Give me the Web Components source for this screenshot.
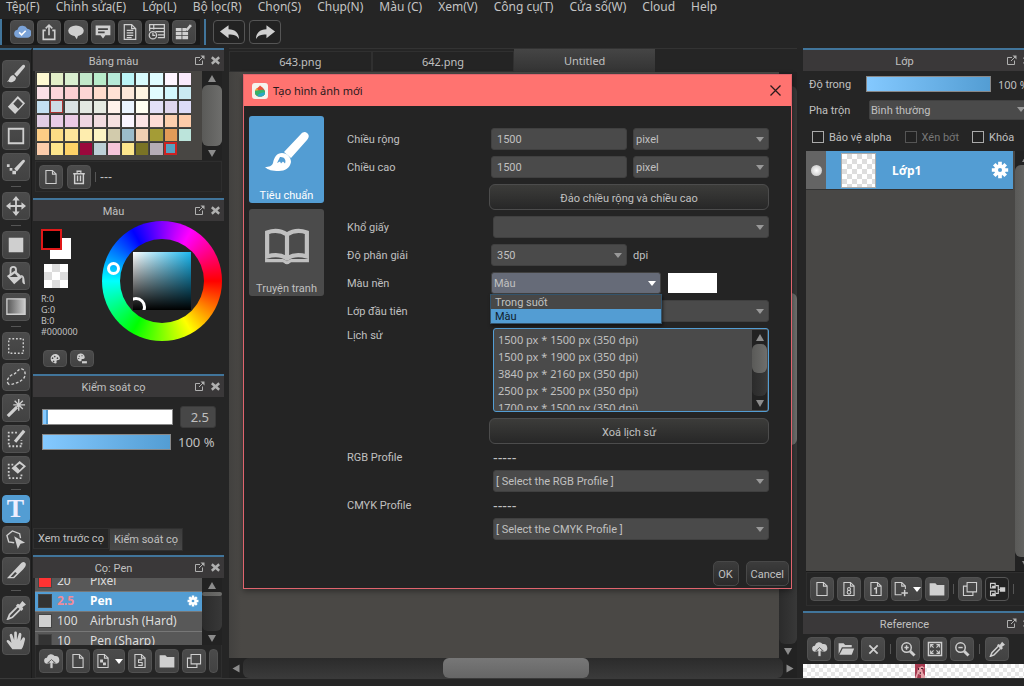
<!DOCTYPE html>
<html lang="vi">
<head>
<meta charset="utf-8">
<title>Untitled</title>
<style>
html, body { margin: 0; height: 100%; background: #252525; overflow: hidden; }
body { font-family: Roboto, "Noto Sans", sans-serif; font-size: 11px; color: #c0c0c0; }
</style>
</head>
<body>
<paint-app></paint-app>
<script>
const BASE = `*{box-sizing:border-box}button,input,select{font:inherit;color:inherit}h1,h2,p,ul{margin:0;padding:0;font:inherit}ul{list-style:none}`;

// Registers an element whose shadow root is cloned from a template.
function define(name, css, html) {
  const tpl = document.createElement('template');
  customElements.define(name, class extends HTMLElement {
    connectedCallback() {
      if (this.shadowRoot) return;
      const root = this.attachShadow({ mode: 'open' });
      tpl.innerHTML = `<style>${BASE}${css}</style>` + (typeof html === 'function' ? html(this) : html);
      root.append(tpl.content.cloneNode(true));
    }
  });
}

const S = 'fill="none" stroke="currentColor" stroke-width="1.5"';
const S2 = 'fill="none" stroke="currentColor" stroke-width="2"';
const PAGE = `<path ${S} d="M4 2h9l5 5v13H4z"/><path ${S} d="M13 2v5h5"/>`;
const CLOUD = 'M6 14a4 4 0 0 1-1-8 5.500 5.500 0 0 1 10-2 4.500 4.500 0 0 1 2 10z';
const ICONS = {
  blank: '',
  cloud: `<path fill="#7ba3d8" d="M6 18a5 5 0 0 1-.5-9.900A6.500 6.500 0 0 1 17.500 7 5.500 5.500 0 0 1 17 18z"/><path fill="none" stroke="#fff" stroke-width="2" d="m7.500 11.500 3 3 5-5"/>`,
  share: `<path ${S2} d="M7 9H4v11h14V9h-3M11 15V3M7 6.500 11 2.500l4 4"/>`,
  bubble: `<ellipse cx="11" cy="9.500" rx="9.500" ry="6.500" fill="currentColor"/><path fill="currentColor" d="M8 14h6l-2 6z"/>`,
  message: `<path fill="currentColor" d="M2 3h18v12h-6l-3 4-3-4H2z"/><path stroke="#444" stroke-width="2" d="M5 7.500h12M5 11.500h8"/>`,
  doc: `${PAGE}<path ${S} d="M7 9h8M7 12h8M7 15h8M7 18h6"/>`,
  history: `<path ${S} d="M2 10V2h18v16h-8M2 6.500h18M7 2v6M9 10.500h11M12 14.500h8"/><circle cx="6" cy="15" r="4.500" ${S}/><path ${S} d="M6 12v3h3"/>`,
  tiles: `<path fill="currentColor" d="M1 6h7v4H1zM9 6h5v4H9zM1 11h7v4H1zM9 11h7v4H9zM1 16h7v4H1zM9 16h7v4H9z"/><path stroke="currentColor" stroke-width="3" d="m14 9 5-6"/><path fill="currentColor" d="M17 2h3v3z"/>`,
  undo: `<path fill="currentColor" d="M1 10 10 3.500v4c7 0 11 4 11 10.500-2-4-5-5-11-5v4z"/>`,
  redo: `<path fill="currentColor" d="M21 10 12 3.500v4C5 7.500 1 11.500 1 18c2-4 5-5 11-5v4z"/>`,
  page: PAGE,
  page8: `${PAGE}<circle cx="11" cy="11" r="2" ${S}/><circle cx="11" cy="15.500" r="2.500" ${S}/>`,
  page1: `${PAGE}<path ${S2} d="m8.500 11 3-1.500V17.500"/>`,
  pageplus: `<path ${S} d="M12 19H3V2h9l5 5v4M12 2v5h5"/><path ${S2} d="M16 12v9M11.500 16.500h9"/>`,
  pages: `${PAGE}<path ${S} d="M14 9.500H9v3.500h5v4H8.500"/>`,
  pagechk: `${PAGE}<path fill="currentColor" d="M7 9h4v4H7zM11 13h4v4h-4z"/>`,
  trash: `<path ${S2} d="M3 6.500h16M8.500 5V3h5v2M5 7v13h12V7M9 9v8M13 9v8"/>`,
  folder: `<path fill="currentColor" d="M2 4h7l2 2h9v13H2z"/>`,
  folderopen: `<path fill="currentColor" d="M2 17V4h6l2 2h8v3H6z"/><path fill="currentColor" d="M7 10.500h14L18 18H3z"/>`,
  copy: `<path ${S} d="M7 2h13v13H7z"/><path ${S} d="M7 7H2v13h13v-5"/>`,
  upload: `<path fill="currentColor" d="${CLOUD}"/><path fill="currentColor" stroke="#444" d="M11 8.500 16 13h-3v7H9v-7H6z"/>`,
  tree: `<path ${S} d="M2 3h6v6H2zM2 13h6v6H2zM9 6h3v10H9M12 11h2"/><path fill="currentColor" d="M14 8h7v6h-7zM4 6h4v3H4zM4 16h4v3H4z"/>`,
  cross: `<path stroke="currentColor" stroke-width="3" d="m4 4 14 14M18 4 4 18"/>`,
  zoomin: `<circle cx="9" cy="9" r="6.500" ${S2}/><path stroke="currentColor" stroke-width="4" d="m14 14 6 6"/><path ${S2} d="M9 6v6M6 9h6"/>`,
  zoomout: `<circle cx="9" cy="9" r="6.500" ${S2}/><path stroke="currentColor" stroke-width="4" d="m14 14 6 6"/><path ${S2} d="M6 9h6"/>`,
  fit: `<path ${S2} d="M2 2h18v18H2z"/><path ${S} d="M5 9V5h4M13 5h4v4M17 13v4h-4M9 17H5v-4M5 5l4 4M17 5l-4 4M5 17l4-4M17 17l-4-4"/>`,
  palette: `<path fill="currentColor" fill-rule="evenodd" d="M11 2a9 8.500 0 1 0 2 17c2-1 0-3 1-5s6 0 6-4-4-8-9-8zM7 8a1.500 1.500 0 1 1-1 3 1.500 1.500 0 0 1 1-3m4-3a1.500 1.500 0 1 1-1 3 1.500 1.500 0 0 1 1-3m5 3a1.500 1.500 0 1 1-1 3 1.500 1.500 0 0 1 1-3m-8 6a1.500 1.500 0 1 1-1 2 1.500 1.500 0 0 1 1-2"/>`,
  palette2: `<path fill="currentColor" fill-rule="evenodd" d="M8 1a7 7 0 1 0 2 14v-3c1-2 6 1 6-4a7 7 0 0 0-8-7zM5 5h2v2H5zm5-1h2v2h-2zM4 9h2v2H4z"/><path fill="currentColor" d="M11 15h9v4h-9z"/>`,
  popout: `<path ${S2} d="M12 5H3v14h14v-8M10 12l9-9"/><path fill="currentColor" d="M13 1h8v8z"/>`,
  close: `<path stroke="currentColor" stroke-width="6" d="m2 3 18 16M20 3 2 19"/>`,
  brush: `<path fill="currentColor" d="M20.500 1.500c1 1 .5 2-.5 3L12 14l-3-3 8.500-9c1-1 2-1.500 3-.5zM8 12l3 3c0 3-3 5-6 5-2 0-3-.5-4-1 3-.5 2-6 7-7z"/>`,
  eraser: `<path fill="currentColor" fill-rule="evenodd" d="M13 1l8 8-11 12-8-8zM13 4l-5 5.500 5.500 5.500 5-5.500z"/>`,
  rect: `<path ${S2} d="M3 3h16v16H3z"/>`,
  dotpen: `<path fill="currentColor" d="M1 8h3v3H1zM4 12h3v3H4zM7 15h4v4H7zM20.500 3.500c1 1 0 2-1 3L12 16l-3-3 8.500-9c1-1 2-1.500 3-.5z"/>`,
  move: `<path ${S2} d="M11 3v16M3 11h16"/><path fill="currentColor" d="m11 0 4 5H7zM11 22l4-5H7zM0 11l5-4v8zM22 11l-5-4v8z"/>`,
  square: `<path fill="currentColor" d="M3 3h16v16H3z"/>`,
  bucket: `<path ${S2} d="M5 10V4a3 3 0 0 1 6 0v5"/><path fill="currentColor" fill-rule="evenodd" d="m10 5 8 7-9 8-8-9zm0 3-6 4h9z"/><path fill="currentColor" d="M16 10c5 0 4 5 5 10-4 0-3-4-3-7z"/>`,
  gradient: `<defs><linearGradient id="g"><stop stop-color="#555"/><stop offset="1" stop-color="#ccc"/></linearGradient></defs><path fill="url(#g)" stroke="currentColor" stroke-width="1.500" d="M1 2h20v17H1z"/>`,
  marquee: `<path fill="none" stroke="currentColor" stroke-width="1.500" stroke-dasharray="2 2" d="M3 3h16v16H3z"/>`,
  lasso: `<path fill="none" stroke="currentColor" stroke-width="1.500" stroke-dasharray="3 2" d="M3 19C-1 15 4 9 8 8s5-6 9-6c5 1 5 8 2 11s-6 4-9 5-6 2-7 1z"/>`,
  wand: `<path stroke="currentColor" stroke-width="3.500" d="M2 20 12 10"/><path ${S} d="M14 1v13M8 7.500h13M9.500 3l9 9M18.500 3l-9 9"/>`,
  selpen: `<path ${S2} stroke-dasharray="2 2" d="M12 4H3v15h14v-7"/><path stroke="currentColor" stroke-width="3.500" d="M10 14 20 2"/>`,
  seleraser: `<path ${S2} stroke-dasharray="2 2" d="M8 5H3v15h14v-6"/><path fill="currentColor" fill-rule="evenodd" d="m15 1 7 6-9 8-7-6zm0 3-4 3 4 4 4-4z"/>`,
  polyarrow: `<path ${S} d="m9 14-6-1-2-7 6-5 8 3 1 5"/><path fill="currentColor" d="m9 7 12 7-5 1-3 6z"/>`,
  knife: `<path fill="currentColor" fill-rule="evenodd" d="M21 2c2 2 0 5-2 7L9 19H1L15 4c2-2 4-4 6-2zM10 12 5 17.500h3l4-4z"/>`,
  dropper: `<path ${S2} d="m13 7-9 9-2 5 5-2 9-9"/><path fill="currentColor" d="m11 6 2-2 2 1 3-4 4 4-4 3 1 2-2 2z"/>`,
  hand: `<path fill="currentColor" d="M7 20 1 12c-1-2 1-3 3-1l2 2L4 5c0-2 2-3 3-1l2 6V2c0-2 3-2 3 0v8l2-7c1-2 3-1 3 1l-1 7 2-3c1-2 3-1 3 1-1 4-2 9-4 11z"/>`,
  bigbrush: `<path fill="currentColor" d="M21 1.500c1.300 1 1 2.200 0 3.500L13 14 9.500 11 18 2c1-1 2-1.300 3-.5z"/><path fill="currentColor" fill-rule="evenodd" d="M8.500 11.500c2.500 0 4.500 2 4.500 4.500-.5 3-3 4.500-6 4.500-3.500 0-5.500-.5-7-2 2 0 3.500-.5 4-2 .5-3 2-5 4.500-5zm-1 2-1.500 3 1.500-.7.5 1 1-1 1 1c.8-2-.5-3.500-2.500-3.300z"/>`,
  book: `<path ${S2} d="M11 5.500C8 3.500 4.500 3.500 1.500 4.500V16c3-.8 7-.8 9.500 1 2.500-1.800 6.500-1.800 9.500-1V4.500c-3-1-6.500-1-9.500 1zM11 5.500V17"/><path ${S} d="M.5 18h8.500c1 0 1 1 2 1s1-1 2-1h8.500"/>`,
  gear: `<g stroke="currentColor" stroke-width="4.500"><path d="M11 1v20M1 11h20M4 4l14 14M18 4 4 18"/></g><circle cx="11" cy="11" r="7" fill="currentColor"/><circle cx="11" cy="11" r="2.500" fill="#539dd3"/>`,
  thin: `<path stroke="currentColor" stroke-width="2.500" d="m1 1 20 20M21 1 1 21"/>`,
  drop: `<rect width="22" height="22" rx="4" fill="#f4f4ee"/><clipPath id="c"><path d="M11 3c1 2 7 4 7 10a7 6 0 0 1-14 0c0-6 5-6 7-10z"/></clipPath><g clip-path="url(#c)"><path fill="#e8513c" d="M0 0h22v22H0z"/><path fill="#f0a83a" d="M3 6l4 1 2 4H3z"/><path fill="#35b36a" d="M3 11c5-1 9-1 12-2l5 2v11H3z"/><path fill="#2aa7c7" d="M7 20c0-5 5-7 12-7v9H7z"/></g>`,
};

define('ui-icon', `:host{display:inline-flex;flex:none}svg{display:block;width:var(--s);height:var(--s)}`,
  el => `<svg viewBox="0 0 22 22" style="--s:${el.getAttribute('size') || 18}px" aria-hidden="true">${ICONS[el.getAttribute('name')]}</svg>`);

define('icon-button', `
:host{display:block;flex:none}
button{display:flex;align-items:center;justify-content:center;gap:4px;width:var(--w,24px);height:var(--h,24px);padding:0;border:1px solid #525252;border-radius:4px;background:linear-gradient(#4b4b4b,#424242);color:#cfcfcf}
:host([dark]) button{background:#222;border-color:#555}
:host([on]) button{background:#539dd3;border-color:#539dd3;color:#eef}
.t{font:bold 26px/26px "Liberation Serif",serif}
i{border:4px solid transparent;border-top:5px solid #fff;border-bottom:0}`,
  el => `<button type="button" aria-label="${el.getAttribute('icon') || 'text'}">${el.hasAttribute('letter') ? '<span class="t">T</span>' : `<ui-icon name="${el.getAttribute('icon')}" size="${el.getAttribute('size') || 16}"></ui-icon>`}${el.hasAttribute('menu') ? '<i></i>' : ''}</button>`);

define('scroll-bar', `
:host{display:flex;flex-direction:column;flex:none;width:18px;background:#222}
:host([horizontal]){flex-direction:row;width:auto;height:20px}
b{flex:none;width:100%;height:14px;display:grid;place-items:center}
:host([horizontal]) b{width:14px;height:100%}
b::before{content:"";border:4px solid transparent;border-bottom:7px solid #8c8c8c;border-top:0}
b.e::before{transform:rotate(180deg)}
:host([horizontal]) b::before{transform:rotate(-90deg)}
:host([horizontal]) b.e::before{transform:rotate(90deg)}
.track{flex:1;min-height:0;display:flex;flex-direction:column;border-radius:6px;background:linear-gradient(90deg,#2b2b2b,#383838)}
:host([horizontal]) .track{flex-direction:row;background:linear-gradient(#2b2b2b,#3a3a3a)}
.before{flex:var(--before,0)}.after{flex:var(--after,1)}
.thumb{flex:var(--thumb,1);border-radius:6px;background:linear-gradient(90deg,#5a5a58,#6e6e6c)}
:host([horizontal]) .thumb{background:linear-gradient(#777,#666)}`,
  `<b></b><div class="track"><div class="before"></div><div class="thumb"></div><div class="after"></div></div><b class="e"></b>`);

define('dock-panel', `
:host{display:flex;flex-direction:column;border-top:2px solid #41759b;background:#252525}
header{display:flex;align-items:center;height:21px;flex:none;padding-right:4px;background:#3a3839}
h2{flex:1;text-align:center;font-size:11px;line-height:17px;padding-top:2px}
header button{display:flex;padding:0;border:0;background:none;color:#b0b0b0;margin-left:6px}
header button:first-of-type{margin-left:0}`,
  el => `<header><h2>${el.getAttribute('heading')}</h2><button aria-label="Tách bảng"><ui-icon name="popout" size="11"></ui-icon></button><button aria-label="Đóng"><ui-icon name="close" size="9"></ui-icon></button></header><slot></slot>`);

define('menu-bar', `
:host{display:block;height:17px;font:12px/13px "Noto Sans",sans-serif;white-space:nowrap}
nav{display:flex;gap:16px;padding-left:6px}
a{color:#c4c4c4;text-decoration:none}`,
  `<nav>${['Tệp(F)','Chỉnh sửa(E)','Lớp(L)','Bộ lọc(R)','Chọn(S)','Chụp(N)','Màu (C)','Xem(V)','Công cụ(T)','Cửa sổ(W)','Cloud','Help'].map(t => `<a href="#">${t}</a>`).join('')}</nav>`);

define('main-tools', `
:host{display:flex;height:31px;padding:2px 0 3px;background:#252525}
div{display:flex;align-items:center;gap:3px;background:#191919;border-left:2px solid #41759b;padding:0 4px 0 8px}
div.e{background:none;gap:4px;padding-left:7px;margin-left:4px}
.e icon-button{--w:32px}`,
  `<div>${['cloud','share','bubble','message','doc','history','tiles'].map(i => `<icon-button icon="${i}" size="18"></icon-button>`).join('')}</div><div class="e"><icon-button dark icon="undo" size="21"></icon-button><icon-button dark icon="redo" size="21"></icon-button></div>`);

define('tool-rail', `
:host{display:flex;flex-direction:column;align-items:center;gap:3px;flex:none;width:32px;padding-top:10px;border-top:2px solid #36607e;border-right:1px solid #1b1b1b}
icon-button{--w:28px;--h:28px}
hr{flex:none;width:10px;height:5px;margin:0;border:0;background:linear-gradient(#555,#555) center/100% 1px no-repeat}`,
  'brush eraser rect dotpen - move - square bucket gradient - marquee lasso wand selpen seleraser - T polyarrow knife - dropper hand'.split(' ').map(i => i === '-' ? '<hr>' : i === 'T' ? '<icon-button on letter></icon-button>' : `<icon-button icon="${i}" size="20"></icon-button>`).join(''));

const PALETTE = `fffad2 e3efc8 daefd0 c2e8ca b9eccb b6ead8 bcf5f7 d8fbfd dffcff fff6ff f9eafb
fbe0e6 fcd6da fcd0d2 fcd5d4 ffdccd ffe1d4 fce9da fff5e2 e2fdff d4f8fd caeaf2
c3e0f1 cddbe6 dae1e4 e3e8e2 e6ebe2 fff2ea ebf5ff fffff2 e3e0f7 dfd6ed dcdbf7
e1cde4 e9cce6 ebcae6 eed6e2 f2dce0 f5e1e0 faf5ff fbe5e6 fddcd6 fccfae fdcba9
fdcd85 fddd85 fee59b feedae fdf4c4 d2cbac 9cbccb f1d0b3 a49c36 e29b58 bce4db
fcccaa fee58b fdd267 9b083c bdd0d6 f5c4d8 fde68c 7a7325 b5acb5 57a0c0`.split(/\s+/);

define('palette-panel', `
:host{display:block;height:121px;padding:0 2px 0 2px}
.top{display:flex;height:89px;background:#484643}
.grid{flex:1;display:grid;grid-template-columns:repeat(11,1fr);grid-auto-rows:13px;gap:1px;align-content:start;padding:1px 11px 0 1px;margin:0}
.grid i{border:solid #3a3a38;border-width:1px 0 0 1px}
.grid i.a{border:1px solid #a33}.grid i.b{border:2px solid #c22}
.bar{display:flex;align-items:center;gap:4px;height:31px;margin-top:1px;padding-left:3px;border:1px solid #2e2e2e;font:12px "Liberation Sans",sans-serif}
s{width:1px;height:10px;background:#555}
scroll-bar{width:20px;--thumb:9;--after:0}`,
  `<div class="top"><div class="grid">${PALETTE.map((c, i) => `<i class="${i === 23 ? 'a' : i === 64 ? 'b' : ''}" style="background:#${c}"></i>`).join('')}</div><scroll-bar></scroll-bar></div><div class="bar"><icon-button icon="page"></icon-button><icon-button icon="trash"></icon-button><s></s><span>---</span></div>`);

define('color-panel', `
:host{display:flex;flex:none;height:147px;padding:0 2px 0 8px;justify-content:space-between}
.left{padding-top:8px}
.pair{position:relative;height:30px;width:30px}
.pair i{position:absolute;width:21px;height:21px}
.pair .bg{right:0;bottom:0;background:#fff}.pair .fg{left:0;top:0;background:#000;border:2px solid #e01818}
.clear{width:24px;height:24px;margin:5px 0 5px 3px;background:repeating-conic-gradient(#ddd 0 25%,#fff 0 50%) 0 0/16px 16px}
p{font:9px/11px "Noto Sans",sans-serif;height:57px}
.btns{display:flex;gap:3px;padding-left:2px}
.btns icon-button{--h:17px}
.wheel{position:relative;width:120px;height:120px;border-radius:50%;background:conic-gradient(from 90deg,red,yellow,lime,cyan,blue,magenta,red);display:grid;place-items:center}
.hole{width:84px;height:84px;border-radius:50%;background:#252525;display:grid;place-items:center}
.sv{position:relative;overflow:hidden;width:58px;height:58px;background:linear-gradient(transparent,#000),linear-gradient(90deg,#fff,#1bb8f0)}
.sv::after{content:"";position:absolute;left:-7px;bottom:-7px;width:14px;height:14px;border:3px solid #fff;border-radius:50%}
.dot{position:absolute;left:5px;top:41px;width:13px;height:13px;border:3px solid #fff;border-radius:50%}`,
  `<div class="left"><div class="pair"><i class="bg"></i><i class="fg"></i></div><div class="clear"></div><p>R:0<br>G:0<br>B:0<br>#000000</p><div class="btns"><icon-button icon="palette" size="12"></icon-button><icon-button icon="palette2" size="12"></icon-button></div></div><div class="wheel"><div class="hole"><div class="sv"></div></div><span class="dot"></span></div>`);

const RANGE = `input[type=range]{appearance:none;display:block;margin:0;height:16px;min-width:0;border:1px solid #888;background:linear-gradient(90deg,#84c9ff,#539dd3)}input[type=range]::-webkit-slider-thumb{appearance:none;width:1px;height:14px}`;

define('control-panel', `
:host{display:flex;flex:1;flex-direction:column;min-height:0;padding-top:7px}
${RANGE}
.r{display:flex;align-items:center;gap:7px;height:25px;padding:0 8px 0 9px;font:13px "Noto Sans",sans-serif}
.r:first-child{margin-top:6px}
.r input[type=range]{flex:1}
input.size{background:linear-gradient(90deg,#84c9ff 3px,#539dd3 3px 5px,#fff 5px)}
input.num{width:36px;height:22px;padding:0 6px 0 0;text-align:right;border:1px solid #3a3a3a;border-radius:3px;background:#474747}
output{width:38px;white-space:nowrap}
.tabs{display:flex;margin-top:auto;height:23px;font-size:11px}
.tabs button{padding:0 4px;border:1px solid #303030;background:#252525;margin-bottom:2px}
.tabs button+button{margin:0;background:linear-gradient(#3c3c3c,#484848)}`,
  `<div class="r"><input class="size" type="range" value="1" aria-label="Kích thước"><input class="num" value="2.5" aria-label="Kích thước"></div><div class="r"><input type="range" value="100" aria-label="Độ trong"><output>100 %</output></div><div class="tabs"><button>Xem trước cọ</button><button>Kiểm soát cọ</button></div>`);

define('brush-panel', `
:host{display:block;padding:0 2px 0}
.top{display:flex;height:67px}
ul{flex:1;display:flex;flex-direction:column;justify-content:center;overflow:hidden;background:#333;font:12px/18px "Noto Sans",sans-serif;color:#ddd}
li{flex:none;display:grid;grid-template-columns:14px 28px 1fr auto;gap:5px;align-items:center;height:20px;padding:0 3px;background:#585858;border-bottom:1px solid #777}
li i{width:14px;height:14px;background:var(--c);border:1px solid #444}
li.on{background:#539dd3;color:#fff;font-weight:bold}.on span:first-of-type{color:#f28b96}
.bar{display:flex;gap:3px;padding:4px 0 0 3px;height:33px;overflow:hidden;border:1px solid #2e2e2e;border-top:0}
scroll-bar{width:20px;--before:0;--thumb:1;--after:8}`,
  `<div class="top"><ul><li style="--c:#f33"><i></i><span>20</span><span>Pixel</span></li><li class="on" style="--c:#333"><i></i><span>2.5</span><span>Pen</span><ui-icon name="gear" size="12"></ui-icon></li><li style="--c:#d0d0d0"><i></i><span>100</span><span>Airbrush (Hard)</span></li><li style="--c:#333"><i></i><span>10</span><span>Pen (Sharp)</span></li></ul><scroll-bar></scroll-bar></div><div class="bar"><icon-button icon="upload" size="17"></icon-button><icon-button icon="page"></icon-button><icon-button icon="pagechk" menu style="--w:32px"></icon-button><icon-button icon="pages"></icon-button><icon-button icon="folder" size="18"></icon-button><icon-button icon="copy"></icon-button><icon-button icon="blank" size="4" style="--w:9px"></icon-button></div>`);

define('left-dock', `
:host{display:flex;flex-direction:column;flex:none;width:192px;padding-left:1px;gap:6px}
.grow{flex:1;min-height:0;margin-bottom:-2px}`,
  `<dock-panel heading="Bảng màu"><palette-panel></palette-panel></dock-panel><dock-panel heading="Màu"><color-panel></color-panel></dock-panel><dock-panel class="grow" heading="Kiểm soát cọ"><control-panel></control-panel></dock-panel><dock-panel heading="Cọ: Pen"><brush-panel></brush-panel></dock-panel>`);

define('new-image-dialog', `
:host{display:flex;flex-direction:column;border:1px solid #e0646e;background:#242424;box-shadow:0 2px 6px #0006}
header{display:flex;align-items:center;gap:5px;height:31px;flex:none;padding:0 10px 0 8px;background:#ff7370;color:#2a1a1c}
h1{flex:1;font:11px/31px "Noto Sans",sans-serif}
header button{display:flex;padding:0;border:0;background:none}
.main{display:flex;padding:10px 22px 0 5px}
.tiles{display:flex;flex-direction:column;gap:6px;width:75px;flex:none;margin-right:23px}
.tiles button{display:flex;flex-direction:column;align-items:center;justify-content:space-between;width:75px;height:87px;padding:14px 0 0;border:0;border-radius:3px;background:#4b4b4b;line-height:15px}
.tiles button.on{background:#539dd3;color:#fff}
form{flex:1;min-width:0;display:grid;grid-template-columns:144px 1fr;row-gap:6px;align-content:start;padding-top:12px}
form>label{height:22px;line-height:24px}
.l{line-height:16px}
.two{display:grid;grid-template-columns:1fr 1fr;gap:6px}
.two>span{align-self:center}
input,select{width:100%;height:22px;border:1px solid #404040;border-radius:3px;background:#4a4a4a;padding:1px 5px 0}
select{appearance:none;padding:1px 2px 0}
#d{padding-left:5px}
.sel{position:relative;display:block}
.sel::after{content:"";position:absolute;right:5px;top:9px;border:4px solid transparent;border-top:5px solid #999;border-bottom:0}
.in{margin-left:2px}
.act{height:26px;margin:0 0 0 -2px;padding:2px 0 0;border:1px solid #4c4c4c;border-radius:6px;background:linear-gradient(#3c3c3a,#272727)}
.span{grid-column:2}
.open{display:flex;gap:7px}
.open .sel{width:170px}
.open select{background:#666b78}.open .sel::after{border-top-color:#fff}
.swatch{width:49px;height:20px;padding:0;border:0;background:#fff;margin-top:1px}
.pop{position:absolute;z-index:2;top:22px;left:-1px;right:-1px;border:1px solid #33536b;background:#474747;box-shadow:1px 2px 3px #0008}
.pop li{height:14px;line-height:15px;padding-left:4px}.pop li.on{background:#539dd3;color:#10202c}
.hist{display:flex;height:84px;margin-left:2px;padding:1px;border:1px solid #539dd3;border-radius:3px;background:#4a4a4a}
.hist ul{flex:1;overflow:hidden;padding:1px 3px;font:11px/17px "Noto Sans",sans-serif}
.hist scroll-bar{width:15px;--thumb:32;--after:26}
form>.p{line-height:16px;height:14px}
span.p{font:14px/16px "Liberation Sans",sans-serif}
footer{display:flex;justify-content:flex-end;gap:7px;margin:21px 2px 2px}
footer button{min-width:26px;height:25px;padding:1px 4px 0;border:1px solid #484848;border-radius:5px;background:linear-gradient(#3c3c3c,#2a2a2a)}`,
`<header><ui-icon name="drop" size="16"></ui-icon><h1>Tạo hình ảnh mới</h1><button aria-label="Đóng"><ui-icon name="thin" size="11"></ui-icon></button></header>
<div class="main">
<div class="tiles"><button class="on"><ui-icon name="bigbrush" size="44"></ui-icon>Tiêu chuẩn</button><button><ui-icon name="book" size="46"></ui-icon>Truyện tranh</button></div>
<form>
<label for="w">Chiều rộng</label><div class="two"><input id="w" value="1500"><span class="sel"><select aria-label="Đơn vị chiều rộng"><option>pixel</select></span></div>
<label for="h">Chiều cao</label><div class="two"><input id="h" value="1500"><span class="sel"><select aria-label="Đơn vị chiều cao"><option>pixel</select></span></div>
<button type="button" class="act span">Đảo chiều rộng và chiều cao</button>
<label for="p">Khổ giấy</label><span class="sel in"><select id="p"><option></select></span>
<label for="d">Độ phân giải</label><div class="two"><span class="sel"><select id="d"><option>350</select></span><span>dpi</span></div>
<label for="b">Màu nền</label><div class="open"><div class="sel"><select id="b"><option>Màu</select><ul class="pop" role="listbox" aria-label="Màu nền"><li role="option">Trong suốt</li><li role="option" class="on" aria-selected="true">Màu</li></ul></div><button type="button" class="swatch" aria-label="Chọn màu nền"></button></div>
<label for="f">Lớp đầu tiên</label><span class="sel in"><select id="f"><option></select></span>
<span class="l" id="hl">Lịch sử</span><div class="hist"><ul role="listbox" aria-labelledby="hl">${['1500 px * 1500','1500 px * 1900','3840 px * 2160','2500 px * 2500','1700 px * 1500'].map(t => `<li role="option">${t} px (350 dpi)</li>`).join('')}</ul><scroll-bar></scroll-bar></div>
<button type="button" class="act span">Xoá lịch sử</button>
<label class="p" for="rgb">RGB Profile</label><span class="p in">-----</span>
<span class="sel in span"><select id="rgb"><option>[ Select the RGB Profile ]</select></span>
<label class="p" for="cmyk">CMYK Profile</label><span class="p in">-----</span>
<span class="sel in span"><select id="cmyk"><option>[ Select the CMYK Profile ]</select></span>
</form></div>
<footer><button>OK</button><button>Cancel</button></footer>`);

define('canvas-area', `
:host{position:relative;display:flex;flex-direction:column;flex:1;min-width:0;margin:0 6px 0 5px;border-top:1px solid #333}
.tabs{display:flex;height:23px;flex:none;padding-right:142px}
.tabs button{flex:1;padding:0;border:1px solid #303030;background:#242424;font-family:"Noto Sans",sans-serif;margin-top:2px}
.tabs button.on{margin:0;background:linear-gradient(#454545,#333);border:0}
.view{flex:1;min-height:0;display:flex;background:linear-gradient(90deg,#42413f,#4a4845 12px)}
.view scroll-bar{margin-left:auto;--before:207;--thumb:152;--after:199}
.h{--before:201;--thumb:147;--after:195}
new-image-dialog{position:absolute;left:14px;right:5px;top:25px}`,
  `<div class="tabs" role="tablist"><button role="tab">643.png</button><button role="tab">642.png</button><button role="tab" class="on">Untitled</button></div><div class="view"><scroll-bar></scroll-bar></div><scroll-bar class="h" horizontal></scroll-bar><new-image-dialog></new-image-dialog>`);

define('layer-panel', `
:host{display:flex;flex:1;flex-direction:column;min-height:0;padding-left:3px}
${RANGE}
.r{display:grid;grid-template-columns:54px 1fr 42px;align-items:center;height:26px;padding-left:3px;column-gap:3px;white-space:nowrap}
.box{grid-column:2/4;position:relative;margin-left:3px}
.box::after{content:"";position:absolute;right:11px;top:7px;border:4px solid transparent;border-top:5px solid #999;border-bottom:0}
.r select{width:100%;display:block;appearance:none;height:20px;border:1px solid #404040;border-radius:2px;padding:0 1px;background:#4a4a4a;font-size:11px}
.r output{padding-left:4px;font-family:"Noto Sans",sans-serif}
.c{display:flex;gap:13px;height:28px;align-items:center;padding-left:6px;white-space:nowrap}
.c label{display:flex;align-items:center;gap:5px}.c .off{color:#777}
.c input{appearance:none;width:12px;height:12px;margin:0;border:1px solid #aaa;background:#222}.c .off input{border-color:#555}
.list{display:flex;flex:1;min-height:0;background:#484745;border-bottom:1px solid #1b1b1b}
.row{flex:1;display:flex;align-items:center;height:39px;background:#539dd3;border-bottom:1px solid #333;padding-right:4px;color:#fff}
.eye{align-self:stretch;width:20px;margin-right:15px;background:#646464;display:grid;place-items:center}
.eye::before{content:"";width:11px;height:11px;border-radius:50%;background:radial-gradient(#fff,#bbb)}
.thumb{width:35px;height:35px;border:1px solid #aaa;background:repeating-conic-gradient(#ddd 0 25%,#fff 0 50%) 0 0/10px 10px}
b{flex:1;padding-left:16px;font:bold 12px "Noto Sans",sans-serif}
scroll-bar{--thumb:1;--after:0;margin-left:2px;width:21px}
.bar{display:flex;align-items:center;gap:3px;height:34px;padding-left:3px;border:1px solid #2e2e2e}
s{width:1px;height:10px;background:#555;margin:0 1px}`,
`<div class="r"><label for="o">Độ trong</label><input id="o" type="range" value="100"><output>100 %</output></div>
<div class="r"><label for="m">Pha trộn</label><span class="box"><select id="m"><option>Bình thường</select></span></div>
<div class="c"><label><input type="checkbox">Bảo vệ alpha</label><label class="off"><input type="checkbox" disabled>Xén bớt</label><label><input type="checkbox">Khóa</label></div>
<div class="list"><div class="row"><span class="eye"></span><span class="thumb"></span><b>Lớp1</b><ui-icon name="gear" size="18"></ui-icon></div><scroll-bar></scroll-bar></div>
<div class="bar"><icon-button icon="page"></icon-button><icon-button icon="page8"></icon-button><icon-button icon="page1"></icon-button><icon-button icon="pageplus" menu style="--w:31px"></icon-button><icon-button icon="folder" size="18"></icon-button><s></s><icon-button icon="copy"></icon-button><icon-button dark icon="tree" size="17"></icon-button><s></s></div>`);

define('reference-panel', `
:host{display:block}
.bar{display:flex;align-items:center;gap:3px;height:30px;padding-left:4px}
s{width:1px;height:10px;background:#555;margin:0 2px}
.img{display:flex;justify-content:center;height:14px;background:repeating-conic-gradient(#e6e6e6 0 25%,#fff 0 50%) 0 0/8px 8px}
svg{width:10px;height:14px}`,
`<div class="bar"><icon-button icon="upload" size="17"></icon-button><icon-button icon="folderopen" size="18"></icon-button><icon-button icon="cross" size="13"></icon-button><s></s><icon-button icon="zoomin"></icon-button><icon-button icon="fit"></icon-button><icon-button icon="zoomout"></icon-button><s></s><icon-button icon="dropper"></icon-button></div>
<div class="img"><svg viewBox="0 0 10 14" aria-hidden="true"><rect width="10" height="14" fill="#e4a3a8"/><path fill="#a83a50" d="M0 0h10v4L7 2 3 4 2 9 0 14zM7 5l3-1v8l-2-3zM3 10l3 1v3H2z"/><path fill="#44222e" d="M3 4h1v2H3zM6 4h2v1H6zM4 9l2-1v2z"/></svg></div>`);

define('right-dock', `
:host{display:block;flex:0 0 221px;overflow:hidden}
.in{display:flex;flex-direction:column;width:233px;height:100%;gap:5px}
.grow{flex:1;min-height:0}`,
  `<div class="in"><dock-panel class="grow" heading="Lớp"><layer-panel></layer-panel></dock-panel><dock-panel heading="Reference"><reference-panel></reference-panel></dock-panel></div>`);

define('paint-app', `
:host{display:flex;flex-direction:column;height:100vh}
main{flex:1;min-height:0;display:flex;border-bottom:1px solid #3a3a3a;margin-bottom:7px}
`,
  `<menu-bar></menu-bar><main-tools></main-tools><main><tool-rail></tool-rail><left-dock></left-dock><canvas-area></canvas-area><right-dock></right-dock></main>`);
</script>
</body>
</html>
